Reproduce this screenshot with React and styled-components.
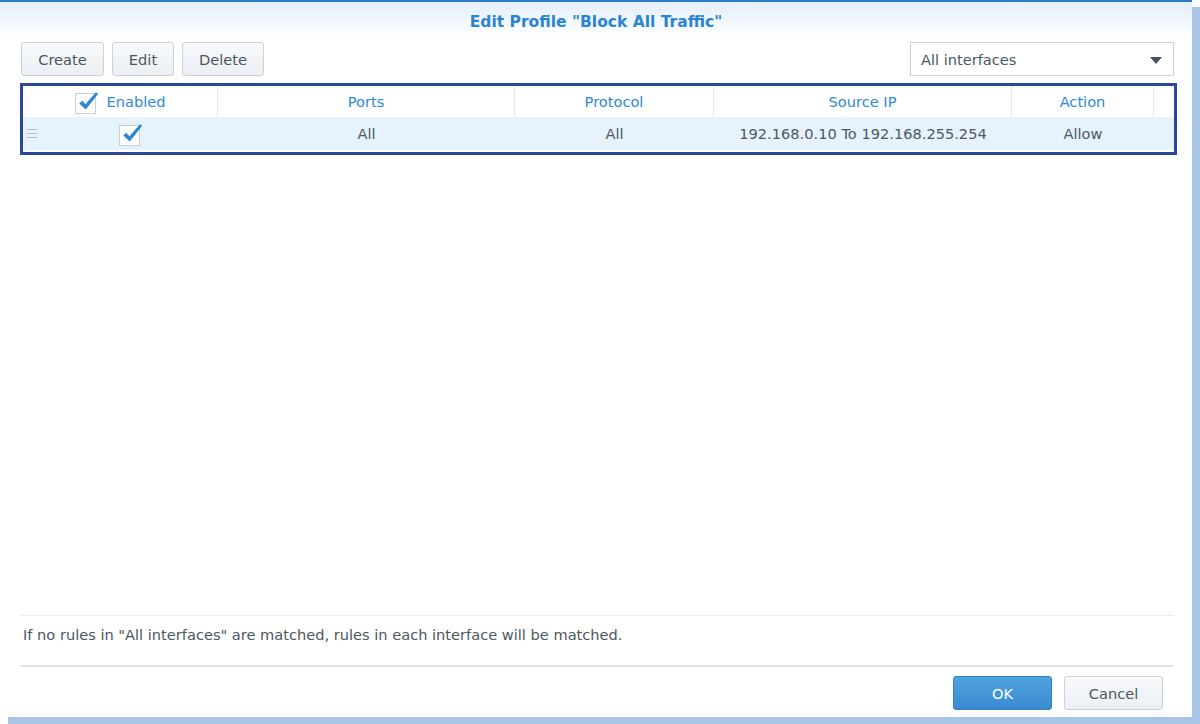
import React from "react";
import styled, { createGlobalStyle } from "styled-components";

const GlobalStyle = createGlobalStyle`
  html, body {
    margin: 0;
    padding: 0;
    background: #ffffff;
  }
  body {
    font-family: "DejaVu Sans", Verdana, sans-serif;
    font-size: 14.6px;
    color: #4d5660;
  }
`;

const Page = styled.div`
  width: 1200px;
  height: 724px;
  overflow: hidden;
  background: #ffffff;
`;

const Dialog = styled.div`
  width: 1192px;
  height: 717px;
  box-sizing: border-box;
  border-top: 2px solid #2f7cc8;
  background: #ffffff;
  box-shadow: 8px 7px 0 #a9c5e6;
  display: flex;
  flex-direction: column;
`;

const TitleBar = styled.div`
  height: 36px;
  flex: 0 0 auto;
  display: flex;
  align-items: center;
  justify-content: center;
  background: linear-gradient(to bottom, #e3effb 0%, #f3f8fd 60%, #ffffff 100%);
`;

const Title = styled.h1`
  margin: 3px 0 0;
  font-size: 15.5px;
  font-weight: bold;
  color: #2a84d0;
`;

const Body = styled.div`
  flex: 1;
  display: flex;
  flex-direction: column;
  padding: 0 18px 0 20px;
  min-height: 0;
`;

const Toolbar = styled.div`
  margin-top: 4px;
  height: 34px;
  display: flex;
  align-items: stretch;
  gap: 8px;
  padding-left: 1px;
`;

const Button = styled.button`
  font: inherit;
  height: 34px;
  width: ${(p) => p.$w || 62}px;
  padding: 0;
  box-sizing: border-box;
  border-radius: 3px;
  cursor: pointer;
  ${(p) =>
    p.$primary
      ? `
        color: #ffffff;
        border: 1px solid #3580c3;
        background: linear-gradient(to bottom, #4ea3df, #3a8ad0);
      `
      : `
        color: #4d5660;
        border: 1px solid #c9d3dc;
        background: linear-gradient(to bottom, #f8fafc, #ebeff3);
      `}
`;

const Spacer = styled.div`
  flex: 1;
`;

const Select = styled.div`
  width: 264px;
  box-sizing: border-box;
  border: 1px solid #c9d3dc;
  background: #ffffff;
  display: flex;
  align-items: center;
  justify-content: space-between;
  padding: 0 11px 0 10px;
  color: #4d5660;
`;

const Arrow = styled.span`
  width: 0;
  height: 0;
  border-left: 6px solid transparent;
  border-right: 6px solid transparent;
  border-top: 7px solid #4a5058;
  margin-top: 2px;
`;

const Table = styled.div`
  margin-top: 7px;
  margin-right: -3px;
  border: 3px solid #2b479b;
  background: #ffffff;
`;

const Row = styled.div`
  display: grid;
  grid-template-columns: 195px 297px 199px 298px 142px 1fr;
  height: ${(p) => (p.$head ? 31 : 35)}px;
  box-sizing: border-box;
  background: ${(p) => (p.$head ? "#ffffff" : "#e6f3fc")};
  border-bottom: ${(p) => (p.$head ? "none" : "2px solid #ffffff")};
`;

const HeadCell = styled.div`
  display: flex;
  align-items: center;
  justify-content: center;
  gap: 8px;
  color: #2b8ad6;
  border-right: 1px solid #e3e9ef;
  &:last-child {
    border-right: none;
  }
`;

const Cell = styled.div`
  display: flex;
  align-items: center;
  justify-content: center;
  color: #4f5862;
`;

const EnabledCell = styled.div`
  display: grid;
  grid-template-columns: 20px 1fr;
  align-items: center;
  justify-items: center;
`;

const Handle = styled.span`
  width: 10px;
  height: 7px;
  margin-left: -2px;
  border-top: 1px solid #b8c0c8;
  border-bottom: 1px solid #b8c0c8;
  position: relative;
  &::after {
    content: "";
    position: absolute;
    left: 0;
    right: 0;
    top: 3px;
    border-top: 1px solid #b8c0c8;
  }
`;

const Grow = styled.div`
  flex: 1;
`;

const Note = styled.div`
  height: 50px;
  box-sizing: border-box;
  border-top: 1px solid #e9eff5;
  padding: 10px 0 0 3px;
  color: #4d5660;
`;

const Footer = styled.div`
  border-top: 2px solid #dfe3e7;
`;

const ButtonBar = styled.div`
  display: flex;
  justify-content: flex-end;
  gap: 12px;
  padding: 9px 29px 7px 0;
`;

function CheckBox() {
  return (
    <svg width="24" height="24" viewBox="0 0 24 24" aria-hidden="true">
      <rect x="0.5" y="3.5" width="20" height="20" fill="#ffffff" stroke="#c6ced7" />
      <path
        d="M4.2 13.4 L7.2 10.8 L10.4 14.2 L21 2.2 L23.2 3.8 L10.8 19.4 Z"
        fill="#2d86d3"
      />
    </svg>
  );
}

const columns = ["Ports", "Protocol", "Source IP", "Action"];

export default function App() {
  return (
    <>
      <GlobalStyle />
      <Page>
        <Dialog>
          <TitleBar>
            <Title>Edit Profile "Block All Traffic"</Title>
          </TitleBar>
          <Body>
            <Toolbar>
              <Button $w={83}>Create</Button>
              <Button $w={62}>Edit</Button>
              <Button $w={82}>Delete</Button>
              <Spacer />
              <Select>
                <span>All interfaces</span>
                <Arrow />
              </Select>
            </Toolbar>
            <Table>
              <Row $head>
                <HeadCell>
                  <CheckBox />
                  <span>Enabled</span>
                </HeadCell>
                {columns.map((c) => (
                  <HeadCell key={c}>{c}</HeadCell>
                ))}
                <HeadCell />
              </Row>
              <Row>
                <EnabledCell>
                  <Handle />
                  <CheckBox />
                </EnabledCell>
                <Cell>All</Cell>
                <Cell>All</Cell>
                <Cell>192.168.0.10 To 192.168.255.254</Cell>
                <Cell>Allow</Cell>
                <Cell />
              </Row>
            </Table>
            <Grow />
            <Note>
              If no rules in "All interfaces" are matched, rules in each interface will be matched.
            </Note>
            <Footer />
          </Body>
          <ButtonBar>
            <Button $primary $w={99}>OK</Button>
            <Button $w={99}>Cancel</Button>
          </ButtonBar>
        </Dialog>
      </Page>
    </>
  );
}
